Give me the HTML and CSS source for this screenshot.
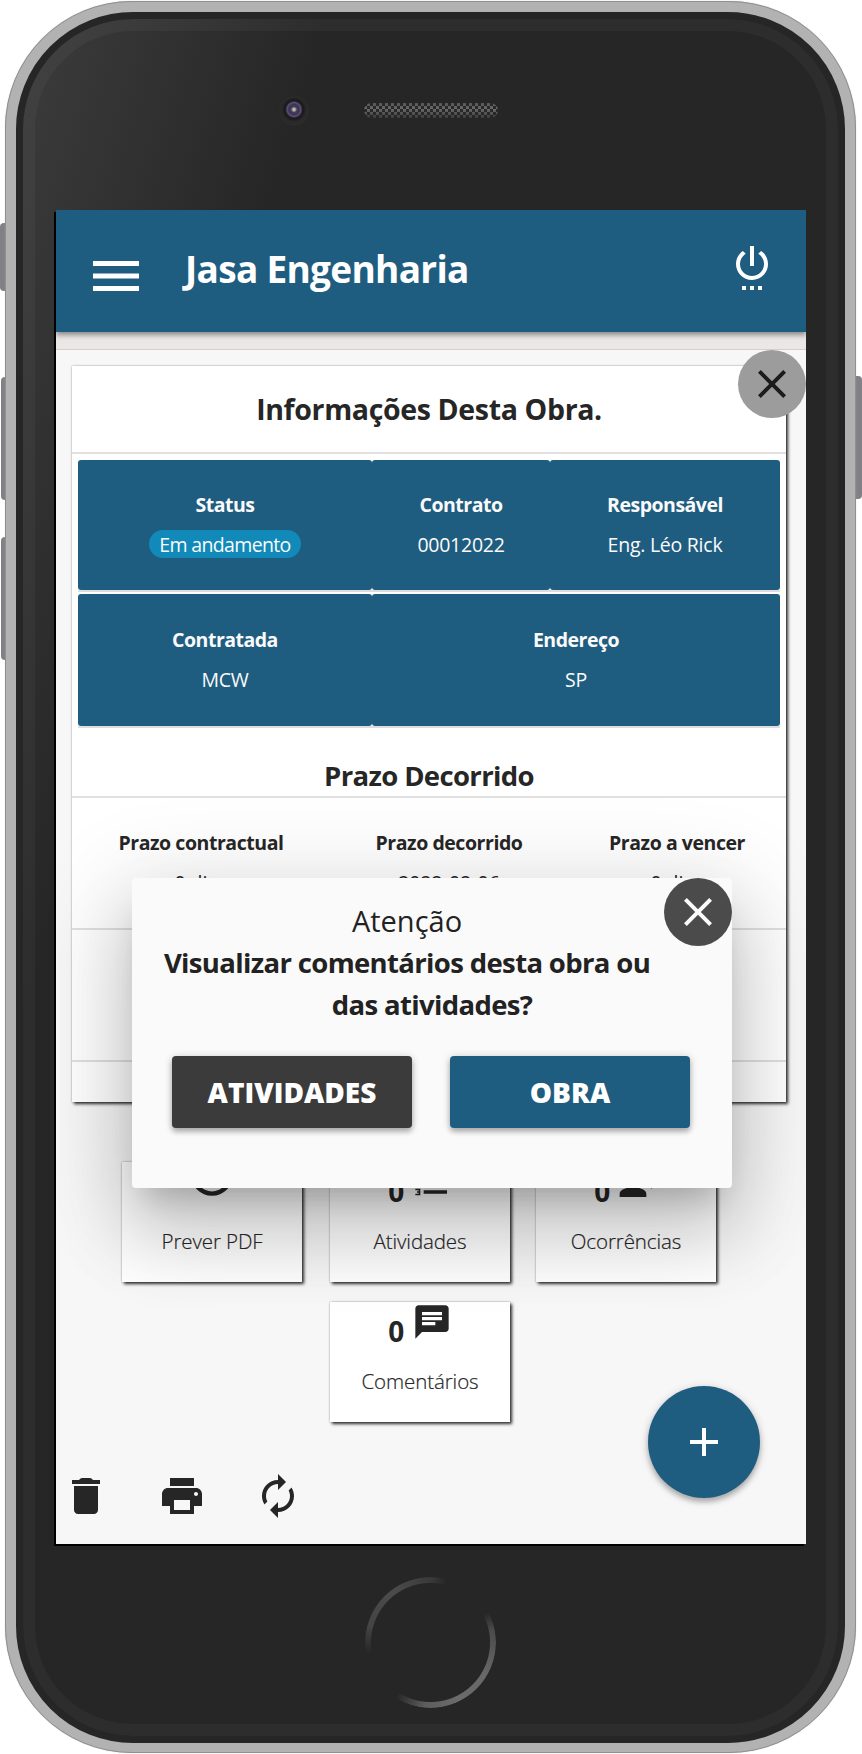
FILE: index.html
```html
<!DOCTYPE html>
<html lang="pt-BR">
<head>
<meta charset="utf-8">
<title>Jasa Engenharia</title>
<link rel="stylesheet" href="styles.css">
</head>
<body>
<div class="device">
  <span class="key key-mute"></span>
  <span class="key key-up"></span>
  <span class="key key-down"></span>
  <span class="key key-power"></span>
  <div class="frame">
    <div class="glass">
      <div class="bezel-top">
        <span class="camera"></span>
        <span class="speaker"></span>
      </div>
      <main class="screen">
        <header class="topbar">
          <svg class="menu" viewBox="0 0 46 30"><path d="M0 0h46v5H0zM0 12.5h46v5H0zM0 25h46v5H0z"/></svg>
          <h1 class="brand">Jasa Engenharia</h1>
          <svg class="icon power" viewBox="0 0 24 24"><path d="M7 24h2v-2H7v2zm4 0h2v-2h-2v2zm2-22h-2v10h2V2zm3.56 2.44l-1.45 1.45C16.84 6.94 18 8.83 18 11c0 3.31-2.69 6-6 6s-6-2.69-6-6c0-2.17 1.16-4.06 2.88-5.12L7.44 4.44C5.36 5.88 4 8.28 4 11c0 4.42 3.58 8 8 8s8-3.58 8-8c0-2.72-1.36-5.12-3.44-6.56zM15 24h2v-2h-2v2z"/></svg>
        </header>
        <div class="strip"></div>
        <div class="content">
          <section class="card">
            <h2 class="card-title">Informações Desta Obra.</h2>
            <div class="info">
              <div class="info-row three">
                <div class="cell"><b>Status</b><span><em class="badge">Em andamento</em></span></div>
                <div class="cell"><b>Contrato</b><span>00012022</span></div>
                <div class="cell"><b>Responsável</b><span>Eng. Léo Rick</span></div>
              </div>
              <div class="info-row two">
                <div class="cell"><b>Contratada</b><span>MCW</span></div>
                <div class="cell"><b>Endereço</b><span>SP</span></div>
              </div>
            </div>
            <h2 class="term-title">Prazo Decorrido</h2>
            <div class="terms">
              <div class="term"><b>Prazo contractual</b><span>0 dias</span></div>
              <div class="term"><b>Prazo decorrido</b><span>2022-02-06</span></div>
              <div class="term"><b>Prazo a vencer</b><span>0 dias</span></div>
            </div>
            <div class="blank"></div>
          </section>
          <nav class="tiles">
            <a class="tile"><span class="tile-top"><svg class="preview" viewBox="0 0 24 24"><circle cx="12" cy="12" r="9.300" fill="none" stroke="currentColor" stroke-width="2.200"/></svg></span><span class="label">Prever PDF</span></a>
            <a class="tile"><span class="tile-top"><b>0</b><svg class="small-icon" viewBox="0 0 24 24"><path d="M2 17h2v.5H3v1h1v.5H2v1h3v-4H2v1zm1-9h1V4H2v1h1v3zm-1 3h1.800L2 13.100v.9h3v-1H3.200L5 10.900V10H2v1zm5-6v2h14V5H7zm0 14h14v-2H7v2zm0-6h14v-2H7v2z"/></svg></span><span class="label">Atividades</span></a>
            <a class="tile"><span class="tile-top"><b>0</b><svg class="small-icon" viewBox="0 0 24 24"><circle cx="9" cy="9" r="4"/><path d="M9 15c-2.670 0-8 1.340-8 4v2h16v-2c0-2.660-5.330-4-8-4zm7.760-9.640l-1.680 1.690c.84 1.180.84 2.710 0 3.890l1.680 1.690c2.020-2.020 2.020-5.070 0-7.270zM20.070 2l-1.630 1.630c2.770 3.020 2.770 7.560 0 10.740L20.070 16c3.900-3.890 3.910-9.950 0-14z"/></svg></span><span class="label">Ocorrências</span></a>
            <a class="tile comments"><span class="tile-top"><b>0</b><svg class="small-icon" viewBox="0 0 24 24"><path d="M20 2H4c-1.100 0-1.990.9-1.990 2L2 22l4-4h14c1.100 0 2-.9 2-2V4c0-1.100-.9-2-2-2zM6 9h12v2H6V9zm8 5H6v-2h8v2zm4-6H6V6h12v2z"/></svg></span><span class="label">Comentários</span></a>
          </nav>
        </div>
        <div class="tools">
          <svg class="icon" viewBox="0 0 24 24"><path d="M6 19c0 1.100.9 2 2 2h8c1.100 0 2-.9 2-2V7H6v12zM19 4h-3.500l-.6-.6c-.3-.3-.6-.4-1-.4h-3.800c-.4 0-.7.1-1 .4l-.6.6H5v2h14V4z"/></svg>
          <svg class="icon" viewBox="0 0 24 24"><path fill-rule="evenodd" d="M19 8H5c-1.660 0-3 1.340-3 3v6h4v4h12v-4h4v-6c0-1.660-1.340-3-3-3zm-3 11H8v-5h8v5zm3-7c-.55 0-1-.45-1-1s.45-1 1-1 1 .45 1 1-.45 1-1 1zm-1-9H6v4h12V3z"/></svg>
          <svg class="icon" viewBox="0 0 24 24"><path d="M12 6v3l4-4-4-4v3c-4.420 0-8 3.580-8 8 0 1.570.46 3.030 1.240 4.260L6.700 14.800c-.45-.83-.7-1.790-.7-2.800 0-3.310 2.690-6 6-6zm6.760 1.740L17.300 9.200c.44.840.7 1.790.7 2.800 0 3.310-2.690 6-6 6v-3l-4 4 4 4v-3c4.420 0 8-3.580 8-8 0-1.570-.46-3.030-1.240-4.260z"/></svg>
        </div>
        <button class="close close-card" aria-label="Fechar"><svg class="icon" viewBox="0 0 24 24"><path d="M19 6.410L17.590 5 12 10.590 6.410 5 5 6.410 10.590 12 5 17.590 6.410 19 12 13.410 17.590 19 19 17.590 13.410 12z"/></svg></button>
        <button class="fab" aria-label="Adicionar"><svg class="icon" viewBox="0 0 24 24"><path d="M19 13h-6v6h-2v-6H5v-2h6V5h2v6h6v2z"/></svg></button>
        <div class="modal">
          <button class="close close-modal" aria-label="Fechar"><svg class="icon" viewBox="0 0 24 24"><path d="M19 6.410L17.590 5 12 10.590 6.410 5 5 6.410 10.590 12 5 17.590 6.410 19 12 13.410 17.590 19 19 17.590 13.410 12z"/></svg></button>
          <div class="modal-text">
            <p class="modal-title">Atenção</p>
            <p class="question">Visualizar comentários desta obra ou das atividades?</p>
          </div>
          <div class="actions">
            <button class="btn btn-dark">ATIVIDADES</button>
            <button class="btn">OBRA</button>
          </div>
        </div>
      </main>
      <div class="home"></div>
    </div>
  </div>
</div>
</body>
</html>
```
FILE: styles.css
```css
* { box-sizing: border-box; }
body { margin: 0; background: #fff; font-family: "Open Sans", "Noto Sans", sans-serif; color: #262626; }
h1, h2, p { margin: 0; }
button { border: 0; padding: 0; font-family: inherit; }
svg { display: block; fill: currentColor; }
.icon { width: 48px; height: 48px; }

/* Device shell */
.device { position: relative; width: 862px; height: 1754px; padding: 1px 6px 0 5px; overflow: hidden; }
.frame { position: relative; height: 1752px; border: 1px solid #8f8f8f; border-radius: 127px; background: #b2b2b2; padding: 10px; box-shadow: 0 0 1px #aaa; }
.glass { position: relative; width: 829px; height: 1731px; border-radius: 117px; background: linear-gradient(107deg, #3c3c3c 0, #262626 290px); border: 7px solid #262626; box-shadow: inset 0 0 0 12px rgba(255, 255, 255, .035); }
.key { position: absolute; width: 10px; background: #808086; border-radius: 4px; }
.key-mute { left: 0; top: 223px; height: 68px; }
.key-up { left: 1px; top: 377px; height: 123px; }
.key-down { left: 1px; top: 537px; height: 123px; }
.key-power { right: 0; top: 376px; height: 123px; }
.bezel-top { display: flex; align-items: center; height: 191px; padding: 0 0 9px 256px; gap: 55px; }
.camera { width: 30px; height: 30px; margin-top: 1px; border-radius: 50%; background: radial-gradient(circle at 50% 45%, #bbb 0 1px, #45404f 3px, #3c3155 5px, #5d5078 7px, #1c1c1f 8.500px 10px, #292929 12px, #2b2b2b 15px); }
.speaker { width: 134px; height: 15px; border-radius: 8px; background: linear-gradient(rgba(38, 38, 38, .3), transparent 40%, rgba(38, 38, 38, .7)), repeating-conic-gradient(#6a6a6a 0 25%, #292929 0 50%) 0 0 / 6px 6px; }
.home { width: 131px; height: 131px; margin: 33px 0 0 342px; border-radius: 50%; background: conic-gradient(#3a3a3a 0, #262626 15deg 62deg, #4a4a4a 78deg, #686868 120deg, #6b6b6b 155deg, #5d5d5d 185deg, #262626 213deg 260deg, #444 285deg, #4b4b4b 325deg, #3a3a3a 360deg); -webkit-mask: radial-gradient(circle, transparent 59px, #000 60px); mask: radial-gradient(circle, transparent 59px, #000 60px); }

/* App screen */
.screen { position: relative; width: 750px; height: 1334px; margin-left: 33px; background: #f7f7f7; box-shadow: -2px 2px 0 #000; clip-path: inset(0 0 -2px -2px); }
.topbar { position: relative; display: flex; align-items: center; height: 122px; padding: 0 30px 0 37px; background: #1f5d80; color: #fff; box-shadow: 0 3px 5px rgba(0, 0, 0, .4); }
.menu { width: 46px; height: 30px; margin-top: 10px; }
.brand { flex: 1; margin-left: 46px; padding-bottom: 6px; font-size: 37px; font-weight: 700; letter-spacing: -.7px; white-space: nowrap; }
.power { margin-bottom: 10px; }
.strip { height: 18px; background: #ebe7e6; border-bottom: 1px solid #d2cfce; }
.content { padding: 16px 20px 0 16px; }

.card { height: 736px; background: #fff; box-shadow: 2px 2px 3px rgba(0, 0, 0, .8), 0 0 2px rgba(0, 0, 0, .3); }
.card-title { height: 88px; line-height: 87px; border-bottom: 2px solid #e0e0e0; text-align: center; font-size: 28.500px; font-weight: 700; letter-spacing: -.35px; }
.info { padding: 6px 6px 0; }
.info-row { display: grid; border-bottom: 2px solid #dedede; }
.three { grid-template-columns: 294px 178px 230px; height: 132px; }
.two { grid-template-columns: 294px 408px; height: 134px; margin-top: 2px; }
.cell { display: flex; flex-direction: column; padding-top: 25px; border-radius: 3px; background: #1f5d80; color: #fafafa; text-align: center; font-size: 19.500px; line-height: 40px; letter-spacing: -.25px; }
.cell b { font-weight: 700; letter-spacing: -.5px; }
.two .cell { padding-top: 26px; }
.badge { display: inline-block; height: 28px; padding: 1px 10px 0; border-radius: 14px; background: #118ab9; line-height: 27px; font-style: normal; letter-spacing: -.65px; }
.term-title { height: 70px; padding-top: 28px; border-bottom: 2px solid #e0e0e0; text-align: center; line-height: 40px; font-size: 27.500px; font-weight: 700; letter-spacing: -.65px; }
.terms { display: grid; grid-template-columns: 258px 238px 218px; height: 132px; padding-top: 25px; border-bottom: 2px solid #e0e0e0; }
.term { display: flex; flex-direction: column; text-align: center; font-size: 19.500px; line-height: 40px; }
.term b { font-weight: 700; letter-spacing: -.45px; }
.blank { height: 132px; border-bottom: 2px solid #e0e0e0; }

.tiles { display: grid; grid-template-columns: 208px 206px 180px; row-gap: 20px; margin: 60px 0 0 50px; }
.tile { width: 180px; height: 120px; background: #fff; box-shadow: 2px 2px 3px rgba(0, 0, 0, .8), 0 0 2px rgba(0, 0, 0, .3); }
.comments { grid-column: 2; }
.tile-top { display: flex; justify-content: center; gap: 8px; height: 57px; font-size: 28px; line-height: 58px; }
.tile-top b { letter-spacing: -.5px; }
.small-icon { width: 40px; height: 40px; }
.preview { width: 48px; height: 48px; margin-top: -11px; }
.label { display: block; text-align: center; font-size: 20.500px; font-weight: 300; line-height: 44px; letter-spacing: -.1px; -webkit-text-stroke: .2px currentColor; }
.tools { display: flex; gap: 48px; margin: 50px 0 0 6px; }

.close { display: flex; align-items: center; justify-content: center; width: 68px; height: 68px; border-radius: 50%; }
.close-card { position: absolute; right: 0; top: 140px; background: #9c9c9c; color: #1c1c1c; }
.fab { position: absolute; right: 46px; bottom: 46px; display: flex; align-items: center; justify-content: center; width: 112px; height: 112px; border-radius: 50%; background: #1f5d80; color: #fff; box-shadow: 0 4px 5px rgba(0, 0, 0, .2), 0 2px 10px rgba(0, 0, 0, .2); }

/* Confirmation dialog */
.modal { position: absolute; left: 76px; top: 668px; width: 600px; height: 310px; padding: 0 18px; border-radius: 4px; background: #fafafa; color: #222; box-shadow: 0 48px 76px 6px rgba(0, 0, 0, .14), 0 18px 92px 16px rgba(0, 0, 0, .12), 0 22px 30px -14px rgba(0, 0, 0, .2); }
.close-modal { float: right; margin-right: -18px; background: #4b4b4b; color: #fafafa; }
.modal-text { padding-top: 22px; text-align: center; font-size: 27.500px; line-height: 42px; }
.modal-title { font-size: 29px; }
.question { font-weight: 700; letter-spacing: -.65px; }
.actions { display: flex; gap: 38px; margin: 30px 0 0 22px; }
.btn { width: 240px; height: 72px; border-radius: 4px; background: #1f5d80; color: #fff; font-size: 28px; font-weight: 800; box-shadow: 0 4px 5px rgba(0, 0, 0, .22), 0 1px 8px rgba(0, 0, 0, .2); }
.btn-dark { background: #3b3b3b; }
```
